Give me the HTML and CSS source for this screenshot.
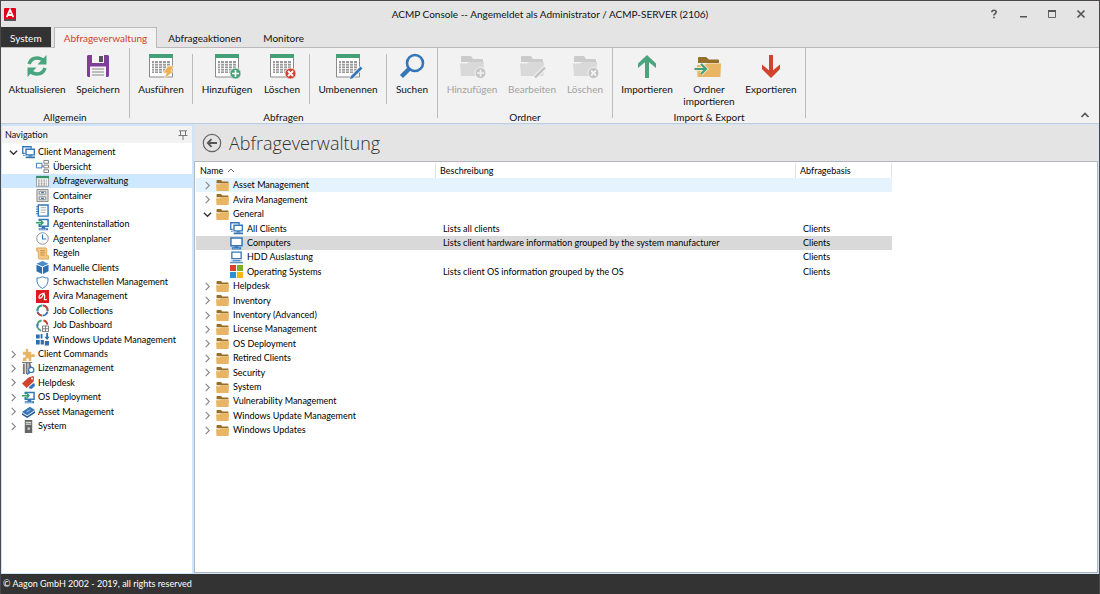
FILE: index.html
```html
<!DOCTYPE html>
<html lang="de">
<head>
<meta charset="utf-8">
<title>ACMP Console</title>
<link rel="stylesheet" href="styles.css">
</head>
<body>
<svg class="sprite" aria-hidden="true">
  <symbol id="table" viewBox="0 0 24 24"><path fill="#fff" stroke="#8a8a8a" d="M.5.5h23v22.500H.5z"/><path fill="#43a077" d="M0 0h24v4H0z"/><path fill="#9a9a9a" d="M3 7h2v12H3zM6 7h3v12H6zM10 7h3v12h-3zM14 7h3v12h-3zM18 7h3v12h-3z"/><path stroke="#fff" stroke-width=".7" d="M3 9.500h18M3 12h18M3 14.500h18M3 17h18"/></symbol>
  <symbol id="folder" viewBox="0 0 24 24"><path fill="#94702a" d="M1 3q0-1 1-1h7q1 0 1.500 1l1 1.500H22q1 0 1 1V8H1z"/><path fill="#e8b564" d="M0 9.500h7l2-1.500h15l-.7 14H1z"/></symbol>
  <symbol id="folder-off" viewBox="0 0 24 24"><path fill="#cbcbcb" d="M1 3q0-1 1-1h9l2 3h9q1 0 1 1v2H1z"/><path fill="#d9d9d9" d="M0 9.500h7l2-1.500h15l-.7 14H1z"/></symbol>
  <symbol id="chev-r" viewBox="0 0 10 10"><path fill="none" stroke="#858585" stroke-width="1.200" d="M3 1l4 4-4 4"/></symbol>
  <symbol id="chev-d" viewBox="0 0 10 10"><path fill="none" stroke="#333" stroke-width="1.500" d="M1 3l4 4 4-4"/></symbol>
  <symbol id="monitor" viewBox="0 0 14 14"><path fill="#fff" stroke="#3476b8" stroke-width="1.600" d="M1 1h12v8.500H1z"/><path fill="#3476b8" d="M5 10h4v1H5zM2 11h10v2.500H2z"/><path stroke="#a9c9e6" stroke-dasharray="1 1" d="M3 12.300h8"/></symbol>
  <symbol id="clients" viewBox="0 0 14 14"><path fill="none" stroke="#3476b8" stroke-width="1.400" d="M3 8H.8V.8h9V3"/><path fill="#fff" stroke="#3476b8" stroke-width="1.500" d="M4.300 3.500h9v6h-9z"/><path fill="#3476b8" d="M7 10h4v1H7zM4 11.200h10v2H4z"/><path fill="#3476b8" d="M1 9.500h2v1H1z"/></symbol>
  <symbol id="laptop" viewBox="0 0 14 14"><path fill="#fff" stroke="#3476b8" stroke-width="1.400" d="M2 1.200h10v7H2z"/><path fill="#c9d9e8" d="M1.500 9h11L14 12H0z"/><path fill="#3476b8" d="M0 12h14v1.300H0zM3 10h8v1H3z"/></symbol>
  <symbol id="windows" viewBox="0 0 14 14"><path fill="#d8412b" d="M0 0h6.500v6.500H0z"/><path fill="#7cae24" d="M7.500 0H14v6.500H7.500z"/><path fill="#2b8fd0" d="M0 7.500h6.500V14H0z"/><path fill="#f2b511" d="M7.500 7.500H14V14H7.500z"/></symbol>
  <symbol id="install" viewBox="0 0 14 14"><path fill="#fff" stroke="#3476b8" stroke-width="1.600" d="M3.500 1.500h9.500V9H3.500z"/><path fill="#3476b8" d="M6 9h4v2H6zM3 11h10v2.300H3z"/><path stroke="#fff" stroke-dasharray="1 1" d="M4 12.200h8"/><path fill="none" stroke="#fff" stroke-width="3" d="M0 5h7"/><path fill="none" stroke="#35a06e" stroke-width="1.600" d="M0 5h7M4.500 2l3 3-3 3"/></symbol>
</svg>

<div class="window">
  <header class="titlebar">
    <svg class="app-icon" viewBox="0 0 12 13"><rect width="12" height="13" rx="1" fill="#e2001a"/><path fill="#555" d="M0 11h12v1q0 1-1 1H1q-1 0-1-1z"/><path fill="none" stroke="#fff" stroke-width="1.800" d="M2.700 9.200 6 1.800l3.300 7.400M4 7h4"/></svg>
    <h1 class="title">ACMP Console -- Angemeldet als Administrator / ACMP-SERVER (2106)</h1>
    <div class="window-buttons">
      <button aria-label="Hilfe"><svg viewBox="0 0 10 10"><path fill="none" stroke="#555" stroke-width="1.600" d="M2.800 3.200Q2.900 1.200 5 1.200T7.200 3Q7.200 4 6 4.700T5 6.500M5 7.700v1.600"/></svg></button>
      <button aria-label="Minimieren"><svg viewBox="0 0 10 10"><path fill="#555" d="M2 7h7v1.500H2z"/></svg></button>
      <button aria-label="Maximieren"><svg viewBox="0 0 10 10"><path fill="none" stroke="#666" d="M1.500 1.500h7v7h-7z"/><path fill="#555" d="M1 1h8v2H1z"/></svg></button>
      <button aria-label="Schließen"><svg viewBox="0 0 10 10"><path stroke="#555" stroke-width="1.700" d="M1.500 1.500l7 7M8.500 1.500l-7 7"/></svg></button>
    </div>
  </header>

  <nav class="tabs" aria-label="Menüband">
    <button class="tab tab-system">System</button>
    <button class="tab tab-active">Abfrageverwaltung</button>
    <button class="tab">Abfrageaktionen</button>
    <button class="tab">Monitore</button>
  </nav>

  <section class="ribbon">
    <div class="group">
      <div class="tools">
        <button class="tool xl"><svg viewBox="0 0 24 24"><g fill="none" stroke="#4aa57f" stroke-width="3.600"><path d="M4 10q2-6 8-6 4 0 7 3"/><path d="M20 14q-2 6-8 6-4 0-7-3"/></g><path fill="#4aa57f" d="M21.500 1v9.500h-9zM2.500 23v-9.500h9z"/></svg><span>Aktualisieren</span></button>
        <button class="tool m"><svg viewBox="0 0 24 24"><path fill="#7d3f98" d="M1 2l1-1h20l1 1v20l-1 1H2l-1-1z"/><path fill="#f4f4f4" d="M6 1h12v8H6zM4 12.500h16V23H4z"/><path fill="#555" d="M13 2h4v6h-4z"/><path stroke="#aaa" stroke-width="1.300" d="M6 15h12M6 18h12M6 21h12"/></svg><span>Speichern</span></button>
      </div>
      <div class="caption">Allgemein</div>
    </div>
    <div class="group">
      <div class="tools">
        <button class="tool m"><svg viewBox="0 0 24 24"><use href="#table"/><path fill="#eeb04a" stroke="#f2f2f2" stroke-width=".7" d="M19 12h6l-3 5h3L15 25l2.500-6H14z"/></svg><span>Ausführen</span></button>
        <i class="rule"></i>
        <button class="tool l"><svg viewBox="0 0 24 24"><use href="#table"/><circle cx="20.500" cy="19.500" r="5.500" fill="#43a077" stroke="#f2f2f2" stroke-width=".8"/><path stroke="#fff" stroke-width="1.700" d="M17 19.500h7M20.500 16v7"/></svg><span>Hinzufügen</span></button>
        <button class="tool s"><svg viewBox="0 0 24 24"><use href="#table"/><circle cx="20.500" cy="19.500" r="5.500" fill="#d0432c" stroke="#f2f2f2" stroke-width=".8"/><path stroke="#fff" stroke-width="1.800" d="M18 17l5 5M23 17l-5 5"/></svg><span>Löschen</span></button>
        <i class="rule"></i>
        <button class="tool xxl"><svg viewBox="0 0 24 24"><use href="#table"/><path stroke="#f2f2f2" stroke-width="4.500" d="M25.500 13.500 15 24"/><path stroke="#3476b8" stroke-width="2.600" d="M25.500 13.500 16 23"/><path fill="#3476b8" d="M14 25l1-3.500 2.500 2.500z"/></svg><span>Umbenennen</span></button>
        <i class="rule"></i>
        <button class="tool xs"><svg viewBox="0 0 24 24"><circle cx="15" cy="9" r="8" fill="none" stroke="#3476b8" stroke-width="2.600"/><path stroke="#3476b8" stroke-width="4.500" d="M9.500 14.500 1.500 22.500"/></svg><span>Suchen</span></button>
      </div>
      <div class="caption">Abfragen</div>
    </div>
    <div class="group">
      <div class="tools">
        <button class="tool l" disabled><svg viewBox="0 0 24 24"><use href="#folder-off"/><circle cx="20.500" cy="19" r="5.500" fill="#c6c6c6" stroke="#f2f2f2"/><path stroke="#f2f2f2" stroke-width="1.600" d="M17 19h7M20.500 15.500v7"/></svg><span>Hinzufügen</span></button>
        <button class="tool ml" disabled><svg viewBox="0 0 24 24"><use href="#folder-off"/><path stroke="#f2f2f2" stroke-width="4.500" d="M25 13.500 14 24.500"/><path stroke="#c2c2c2" stroke-width="2.400" d="M25 13.500 15 23.500"/></svg><span>Bearbeiten</span></button>
        <button class="tool s" disabled><svg viewBox="0 0 24 24"><use href="#folder-off"/><circle cx="20.500" cy="19" r="5.500" fill="#c2c2c2" stroke="#f2f2f2"/><path stroke="#f2f2f2" stroke-width="1.800" d="M18 16.500l5 5M23 16.500l-5 5"/></svg><span>Löschen</span></button>
      </div>
      <div class="caption">Ordner</div>
    </div>
    <div class="group">
      <div class="tools">
        <button class="tool l"><svg viewBox="0 0 24 24"><path fill="none" stroke="#4aa57f" stroke-width="4" d="M12 24V4"/><path fill="#4aa57f" d="M12 1l9 8.500V14l-9-7.500L3 14V9.500z"/></svg><span>Importieren</span></button>
        <button class="tool l"><svg viewBox="0 0 24 24"><path fill="#94702a" d="M1 4q0-1 1-1h7l3 2.500h9q1 0 1 1V9H1z"/><path fill="#e8b564" d="M0 11h7l3-1.500h14l-.6 13.500H.5z"/><path fill="none" stroke="#f2e6cd" stroke-width="4" d="M-2.500 15H8M4 10l5 5-5 5"/><path fill="none" stroke="#43a077" stroke-width="2.200" d="M-2.500 15H8M4 10l5 5-5 5"/></svg><span>Ordner<br>importieren</span></button>
        <button class="tool l"><svg viewBox="0 0 24 24"><path fill="none" stroke="#d0432c" stroke-width="4" d="M12 1v19"/><path fill="#d0432c" d="M12 24l9-9v-4.500l-9 7.500-9-7.500V15z"/></svg><span>Exportieren</span></button>
      </div>
      <div class="caption">Import &amp; Export</div>
    </div>
    <button class="collapse" aria-label="Menüband minimieren"><svg viewBox="0 0 10 10"><path fill="none" stroke="#555" stroke-width="1.700" d="M1.500 7 5 3.500 8.500 7"/></svg></button>
  </section>

  <div class="workspace">
    <aside class="sidebar">
      <div class="sidebar-head"><h2>Navigation</h2><button aria-label="Anheften"><svg viewBox="0 0 10 10"><path fill="none" stroke="#777" d="M1 .8h8M2.500 1v4M7.500 1v4M.5 5.500h9M5 6v4"/></svg></button></div>
      <ul class="tree">
        <li><a href="#"><svg><use href="#chev-d"/></svg><svg><use href="#clients"/></svg>Client Management</a></li>
        <li class="child"><a href="#"><svg viewBox="0 0 14 14"><path fill="#fff" stroke="#3476b8" d="M.5 3.500h6v5h-6z"/><path fill="#fff" stroke="#777" d="M8.500.5h5v3h-5zM8.500 5.500h5v3h-5zM8.500 10.500h5v3h-5z"/><path stroke="#777" d="M6 6.500h2"/></svg>Übersicht</a></li>
        <li class="child"><a href="#" aria-current="page"><svg viewBox="0 0 14 14"><path fill="#fff" stroke="#999" d="M.5 1.500h13v11H.5z"/><path fill="#35936a" d="M0 1h14v2.500H0z"/><path stroke="#777" stroke-dasharray="2 1" d="M2 5.500h10M2 7.500h10M2 9.500h10M2 11h10"/></svg>Abfrageverwaltung</a></li>
        <li class="child"><a href="#"><svg viewBox="0 0 14 14"><path fill="#ddd" stroke="#888" d="M1 .5h12v13H1z"/><path fill="#fff" stroke="#888" d="M3.500 2.500h7v3h-7zM3.500 8.500h7v3h-7z"/><path stroke="#3476b8" stroke-width="1.300" d="M5.500 4h3M5.500 10h3"/></svg>Container</a></li>
        <li class="child"><a href="#"><svg viewBox="0 0 14 14"><path fill="#fff" stroke="#3476b8" stroke-width="1.500" d="M2.500 1h10.500v12H2.500z"/><path stroke="#3476b8" d="M0 3h3M0 5.500h3M0 8h3M0 10.500h3"/><path stroke="#aaa" d="M5 4h6M5 6.500h6M5 9h5"/></svg>Reports</a></li>
        <li class="child"><a href="#"><svg><use href="#install"/></svg>Agenteninstallation</a></li>
        <li class="child"><a href="#"><svg viewBox="0 0 14 14"><circle cx="7" cy="7" r="6.200" fill="#fff" stroke="#888"/><path fill="none" stroke="#3476b8" stroke-width="1.200" d="M7 2.800V7.500h4"/></svg>Agentenplaner</a></li>
        <li class="child"><a href="#"><svg viewBox="0 0 14 14"><path fill="#f4c987" stroke="#dfa350" d="M2.500 4.500H.8V1h9.500q1.200 0 1.200 1.500V9.500h2v3.500H4q-1.500 0-1.500-1.500z"/><path stroke="#c98b35" d="M4.500 4h5M4.500 6.300h5M4.500 8.600h5"/></svg>Regeln</a></li>
        <li class="child"><a href="#"><svg viewBox="0 0 14 14"><path fill="#4a8cc8" d="M7 0l6.500 3L7 6 .5 3z"/><path fill="#2c6fb0" d="M.5 4l6 2.700V14l-6-3zM13.500 4l-6 2.700V14l6-3z"/></svg>Manuelle Clients</a></li>
        <li class="child"><a href="#"><svg viewBox="0 0 14 14"><path fill="#fff" stroke="#3476b8" d="M7 .8q3 1.500 6 1.400Q13.500 10.500 7 13.400.5 10.500 1 2.200 4 2.300 7 .8z"/></svg>Schwachstellen Management</a></li>
        <li class="child"><a href="#"><svg viewBox="0 0 14 14"><path fill="#de1820" d="M0 0h14v14H0z"/><path fill="none" stroke="#fff" stroke-width="1.300" d="M3 8.500Q3.500 4 8.500 3.500L6.500 7.500Q4.500 9.500 3 8.500M8.500 3.500q1.500 2.500.5 6.500 1 1 2.500 0"/></svg>Avira Management</a></li>
        <li class="child"><a href="#"><svg viewBox="0 0 14 14"><g fill="none" stroke-width="2"><circle cx="7" cy="7" r="5.500" stroke="#3476b8"/><path stroke="#43a077" d="M1.500 7A5.500 5.500 0 0 1 6 1.600"/><path stroke="#d0432c" d="M8 1.600A5.500 5.500 0 0 1 12.500 7M2 9.500a5.500 5.500 0 0 0 4 3"/></g><path stroke="#fff" stroke-width=".6" d="M7 0v3M0 8h3M11 8h3M7 11v3"/></svg>Job Collections</a></li>
        <li class="child"><a href="#"><svg viewBox="0 0 14 14"><g fill="none" stroke-width="2"><path stroke="#43a077" d="M1.500 7A5.500 5.500 0 0 1 6 1.600M2 9.500a5.500 5.500 0 0 0 3.500 3"/><path stroke="#d0432c" d="M8 1.600A5.500 5.500 0 0 1 12.300 6"/><path stroke="#3476b8" d="M1.500 5.500v4"/></g><path fill="#fff" stroke="#777" d="M7 7.500h6.500v6H7zM7 10.500h6.500M10.200 7.500v6"/></svg>Job Dashboard</a></li>
        <li class="child"><a href="#"><svg viewBox="0 0 14 14"><path fill="#2c6fb0" d="M0 1.500h4V6H0zM5 1h2v5H5zM0 7.500h4v5H0zM5 7.500h3.500v5H5zM9.500 8.500H14v5H9.500zM11 0h2v4h1.500L12 7.500 9 4h2z"/></svg>Windows Update Management</a></li>
        <li><a href="#"><svg><use href="#chev-r"/></svg><svg viewBox="0 0 14 14"><path fill="#e8b564" d="M1 4h3.500Q3 1 5.300.8T6.300 4H10v3.300Q13.500 5.500 14 8t-4 1.800V14H7q1-3-1-3t-1 3H1v-3.500q3 .5 3-1.500T1 7.500z"/></svg>Client Commands</a></li>
        <li><a href="#"><svg><use href="#chev-r"/></svg><svg viewBox="0 0 14 14"><path fill="#777" d="M1 2h2v11H1zM4 1h2v12H4zM7 1h2l1.500 5L9 7 8 13H7zM0 0h11v1H0z"/><circle cx="10" cy="8.500" r="2.800" fill="#fff" stroke="#3476b8" stroke-width="1.300"/><path stroke="#3476b8" stroke-width="1.500" d="M8 11l-2.500 2.500"/></svg>Lizenzmanagement</a></li>
        <li><a href="#"><svg><use href="#chev-r"/></svg><svg viewBox="0 0 14 14"><path fill="#d0432c" d="M0 8l7-6.500L12 0l1 1-.5 5L5 13z"/><circle cx="10.800" cy="2.800" r="1.100" fill="#fff"/><path fill="#3476b8" stroke="#fff" stroke-width=".6" d="M7 12l5-4.500L14 8v3l-3.500 3H8z"/></svg>Helpdesk</a></li>
        <li><a href="#"><svg><use href="#chev-r"/></svg><svg><use href="#install"/></svg>OS Deployment</a></li>
        <li><a href="#"><svg><use href="#chev-r"/></svg><svg viewBox="0 0 14 14"><path fill="#3476b8" d="M0 7.500L8.500 2 14 5.500 5.500 11z"/><path fill="#205a96" d="M0 8.500l5.500 3.500L14 6.500v2L5.500 14 0 10.500z"/><path stroke="#b7d3ec" d="M5 7.500l4-2.600"/></svg>Asset Management</a></li>
        <li><a href="#"><svg><use href="#chev-r"/></svg><svg viewBox="0 0 14 14"><path fill="#666" d="M3 0h8v14H3z"/><path stroke="#fff" d="M4 2.500h6M4 4.500h6"/><path fill="#ccc" d="M6 8h2.500v2.500H6z"/></svg>System</a></li>
      </ul>
    </aside>

    <main class="main">
      <div class="main-head">
        <button aria-label="Zurück"><svg viewBox="0 0 20 20"><circle cx="10" cy="10" r="8.700" fill="none" stroke="#666" stroke-width="1.200"/><path fill="none" stroke="#555" stroke-width="1.800" d="M6 10h9M9.500 6.200 5.800 10l3.700 3.800"/></svg></button>
        <h2>Abfrageverwaltung</h2>
      </div>
      <div class="grid-panel">
        <table class="grid">
          <colgroup><col class="c-name"><col class="c-desc"><col class="c-base"></colgroup>
          <thead><tr><th>Name <svg class="sort" viewBox="0 0 10 8"><path fill="none" stroke="#666" d="M2 6l3-3 3 3"/></svg></th><th>Beschreibung</th><th>Abfragebasis</th></tr></thead>
          <tbody>
            <tr class="hot"><td><span class="node"><svg><use href="#chev-r"/></svg><svg><use href="#folder"/></svg>Asset Management</span></td><td></td><td></td></tr>
            <tr><td><span class="node"><svg><use href="#chev-r"/></svg><svg><use href="#folder"/></svg>Avira Management</span></td><td></td><td></td></tr>
            <tr><td><span class="node"><svg><use href="#chev-d"/></svg><svg><use href="#folder"/></svg>General</span></td><td></td><td></td></tr>
            <tr><td><span class="node leaf"><svg><use href="#clients"/></svg>All Clients</span></td><td>Lists all clients</td><td>Clients</td></tr>
            <tr class="selected"><td><span class="node leaf"><svg><use href="#monitor"/></svg>Computers</span></td><td>Lists client hardware information grouped by the system manufacturer</td><td>Clients</td></tr>
            <tr><td><span class="node leaf"><svg><use href="#laptop"/></svg>HDD Auslastung</span></td><td></td><td>Clients</td></tr>
            <tr><td><span class="node leaf"><svg><use href="#windows"/></svg>Operating Systems</span></td><td>Lists client OS information grouped by the OS</td><td>Clients</td></tr>
            <tr><td><span class="node"><svg><use href="#chev-r"/></svg><svg><use href="#folder"/></svg>Helpdesk</span></td><td></td><td></td></tr>
            <tr><td><span class="node"><svg><use href="#chev-r"/></svg><svg><use href="#folder"/></svg>Inventory</span></td><td></td><td></td></tr>
            <tr><td><span class="node"><svg><use href="#chev-r"/></svg><svg><use href="#folder"/></svg>Inventory (Advanced)</span></td><td></td><td></td></tr>
            <tr><td><span class="node"><svg><use href="#chev-r"/></svg><svg><use href="#folder"/></svg>License Management</span></td><td></td><td></td></tr>
            <tr><td><span class="node"><svg><use href="#chev-r"/></svg><svg><use href="#folder"/></svg>OS Deployment</span></td><td></td><td></td></tr>
            <tr><td><span class="node"><svg><use href="#chev-r"/></svg><svg><use href="#folder"/></svg>Retired Clients</span></td><td></td><td></td></tr>
            <tr><td><span class="node"><svg><use href="#chev-r"/></svg><svg><use href="#folder"/></svg>Security</span></td><td></td><td></td></tr>
            <tr><td><span class="node"><svg><use href="#chev-r"/></svg><svg><use href="#folder"/></svg>System</span></td><td></td><td></td></tr>
            <tr><td><span class="node"><svg><use href="#chev-r"/></svg><svg><use href="#folder"/></svg>Vulnerability Management</span></td><td></td><td></td></tr>
            <tr><td><span class="node"><svg><use href="#chev-r"/></svg><svg><use href="#folder"/></svg>Windows Update Management</span></td><td></td><td></td></tr>
            <tr><td><span class="node"><svg><use href="#chev-r"/></svg><svg><use href="#folder"/></svg>Windows Updates</span></td><td></td><td></td></tr>
          </tbody>
        </table>
      </div>
    </main>
  </div>
  <footer class="statusbar">© Aagon GmbH 2002 - 2019, all rights reserved</footer>
</div>
</body>
</html>
```
FILE: styles.css
```css
* { box-sizing: border-box; }
body { margin: 0; font: 10px/14px Lato, "Noto Sans", sans-serif; color: #111; }
button { margin: 0; padding: 0; border: 0; background: none; font: inherit; color: inherit; }
h1, h2 { margin: 0; font: inherit; }
svg { display: block; flex: none; overflow: visible; }
.sprite { position: absolute; width: 0; height: 0; }

.window { display: flex; flex-direction: column; min-height: 100vh; border: 1px solid #4a484c; border-bottom: 0; background: #e4e4e4; }

.titlebar { display: grid; grid-template-columns: 128px 1fr 128px; align-items: center; height: 26px; }
.app-icon { width: 12px; height: 13px; margin-left: 3px; }
.title { text-align: center; }
.window-buttons { display: flex; justify-content: flex-end; gap: 18px; padding-right: 12px; }
.window-buttons svg { width: 10px; height: 10px; }
.window-buttons button { width: 11px; }

.tabs { display: flex; height: 21px; border-bottom: 1px solid #b9b9b9; }
.tab { padding: 0 10px; line-height: 21px; border: 1px solid transparent; border-bottom: 0; }
.tab-system { padding: 0 8px; margin-right: 3px; background: #333; color: #fff; }
.tab-active { padding: 0 9px; margin-bottom: -1px; border-color: #b9b9b9; background: #f2f2f2; color: #d0432c; }

.ribbon { display: flex; height: 76px; background: #f2f2f2; border-bottom: 1px solid #c4cbd2; }
.group { display: flex; flex-direction: column; justify-content: space-between; margin-bottom: 5px; padding: 0 3px; border-right: 1px solid #bcbcbc; }
.tools { display: flex; align-items: flex-start; padding-top: 6px; }
.tool { display: flex; flex-direction: column; align-items: center; gap: 5px; line-height: 12px; white-space: nowrap; }
.tool svg { width: 24px; height: 24px; }
.tool:disabled { color: #a3a3a3; }
.xs { width: 44px; }
.s { width: 48px; }
.m { width: 56px; }
.ml { width: 58px; }
.l { width: 62px; }
.xl { width: 66px; }
.xxl { width: 70px; }
.rule { width: 1px; height: 50px; margin: 0 3px; background: #bcbcbc; }
.caption { height: 1px; line-height: 0; text-align: center; }
.collapse { align-self: flex-end; margin: 0 9px 3px auto; }
.collapse svg { width: 10px; height: 10px; }

.workspace { flex: 1; display: flex; gap: 2px; padding: 1px; background: #cfe6fa; font-size: 9px; }
.sidebar { width: 190px; margin-top: 1px; background: #fff; }
.sidebar-head { display: flex; align-items: center; justify-content: space-between; height: 17px; padding: 0 4px 0 3px; background: #f2f2f2; }
.sidebar-head svg { width: 10px; height: 10px; }
.tree { margin: 0; padding: 2px 0 0; list-style: none; color: #000; }
.tree a { display: flex; align-items: center; gap: 3px; height: 14px; padding-left: 7px; color: inherit; text-decoration: none; white-space: nowrap; }
.tree li:nth-child(5n+2) a, .tree li:nth-child(5n+4) a { height: 15px; }
.tree svg { width: 13px; height: 13px; }
.tree a svg:first-child:not(:last-child) { width: 9px; height: 9px; margin-right: 1px; }
.tree .child a { gap: 4px; padding-left: 34px; }
.tree a[aria-current] { background: #cde8ff; }

.main { flex: 1; display: flex; flex-direction: column; min-width: 0; background: #e4e4e4; }
.main-head { display: flex; align-items: center; gap: 7px; height: 36px; padding-left: 8px; }
.main-head svg { width: 20px; height: 20px; }
.main-head h2 { font: 300 18px/24px "Open Sans", "Noto Sans", sans-serif; color: #333; }
.grid-panel { flex: 1; padding: 1px; border: 1px solid #b4b7c0; background: #fff; color: #000; }
.grid { width: 696px; table-layout: fixed; border-collapse: separate; border-spacing: 0; }
.grid th, .grid td { white-space: nowrap; }
.c-name { width: 240px; }
.c-desc { width: 360px; }
.c-base { width: 96px; }
.grid th { height: 15px; padding: 0 4px; border-right: 1px solid #e2e2e2; font-weight: 400; text-align: left; }
.grid td { height: 14px; padding: 0 7px; line-height: 14px; }
.grid tbody tr:nth-child(5n+2) td, .grid tbody tr:nth-child(5n+4) td { height: 15px; }
.sort { display: inline-block; width: 10px; height: 8px; }
.node { display: flex; align-items: center; gap: 4px; }
.node svg { width: 13px; height: 13px; }
.node svg:first-child:not(:last-child) { width: 9px; height: 9px; }
.node.leaf { padding-left: 27px; }
.hot { background: #e5f3ff; }
.selected { background: #d9d9d9; }

.statusbar { height: 20px; padding: 0 2px; background: #333; color: #fff; font-size: 9px; line-height: 20px; }
```
